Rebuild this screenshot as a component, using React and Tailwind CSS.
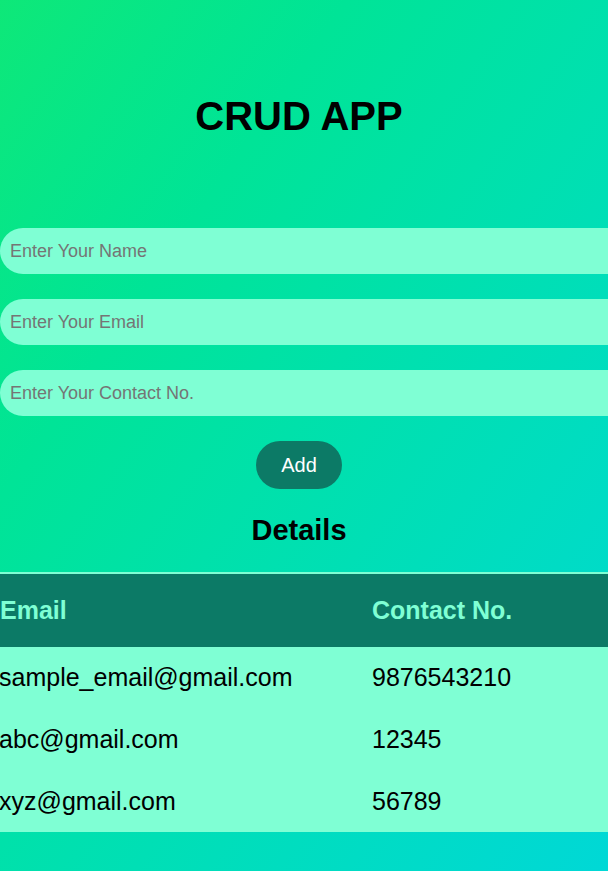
import React from "react";

const rows = [
  { email: "sample_email@gmail.com", contact: "9876543210" },
  { email: "abc@gmail.com", contact: "12345" },
  { email: "xyz@gmail.com", contact: "56789" },
];

const fields = ["Enter Your Name", "Enter Your Email", "Enter Your Contact No."];

export default function App() {
  return (
    <div
      className="min-h-screen w-full overflow-hidden bg-linear-to-br from-[#0ee878] to-[#00d8d6]"
      style={{ fontFamily: '"Liberation Sans", Arial, sans-serif' }}
    >
      <div className="flex flex-col items-center pr-[10px] pt-[96px]">
        <h1 className="text-[40px] leading-[40px] font-bold text-black">CRUD APP</h1>
      </div>

      <form className="flex flex-col gap-[25px] mt-[92px]" onSubmit={(e) => e.preventDefault()}>
        {fields.map((f) => (
          <input
            key={f}
            type="text"
            placeholder={f}
            className="h-[46px] w-[640px] rounded-full bg-[#7fffd4] pl-[10px] text-[18px] text-black placeholder:text-[#757575] outline-none"
          />
        ))}
        <div className="flex justify-center pr-[10px]">
          <button
            type="submit"
            className="h-[48px] w-[86px] rounded-full bg-[#0c7a66] text-[20px] text-white"
          >
            Add
          </button>
        </div>
      </form>

      <div className="flex justify-center pr-[10px] mt-[27px]">
        <h2 className="text-[29px] leading-[28px] font-bold text-black">Details</h2>
      </div>

      <div className="mt-[28px] border-t-2 border-[#7fffd4]">
        <div className="grid grid-cols-[372px_1fr] h-[73px] items-center bg-[#0c7a66] text-[25px] font-bold text-[#7fffd4]">
          <div>Email</div>
          <div>Contact No.</div>
        </div>
        <div className="bg-[#7fffd4] text-[25px] text-black">
          {rows.map((r, i) => (
            <div
              key={r.email}
              className={`grid grid-cols-[372px_1fr] items-center ${i === 2 ? "h-[61px]" : "h-[62px]"}`}
            >
              <div className="-ml-[1px]">{r.email}</div>
              <div>{r.contact}</div>
            </div>
          ))}
        </div>
      </div>
    </div>
  );
}
